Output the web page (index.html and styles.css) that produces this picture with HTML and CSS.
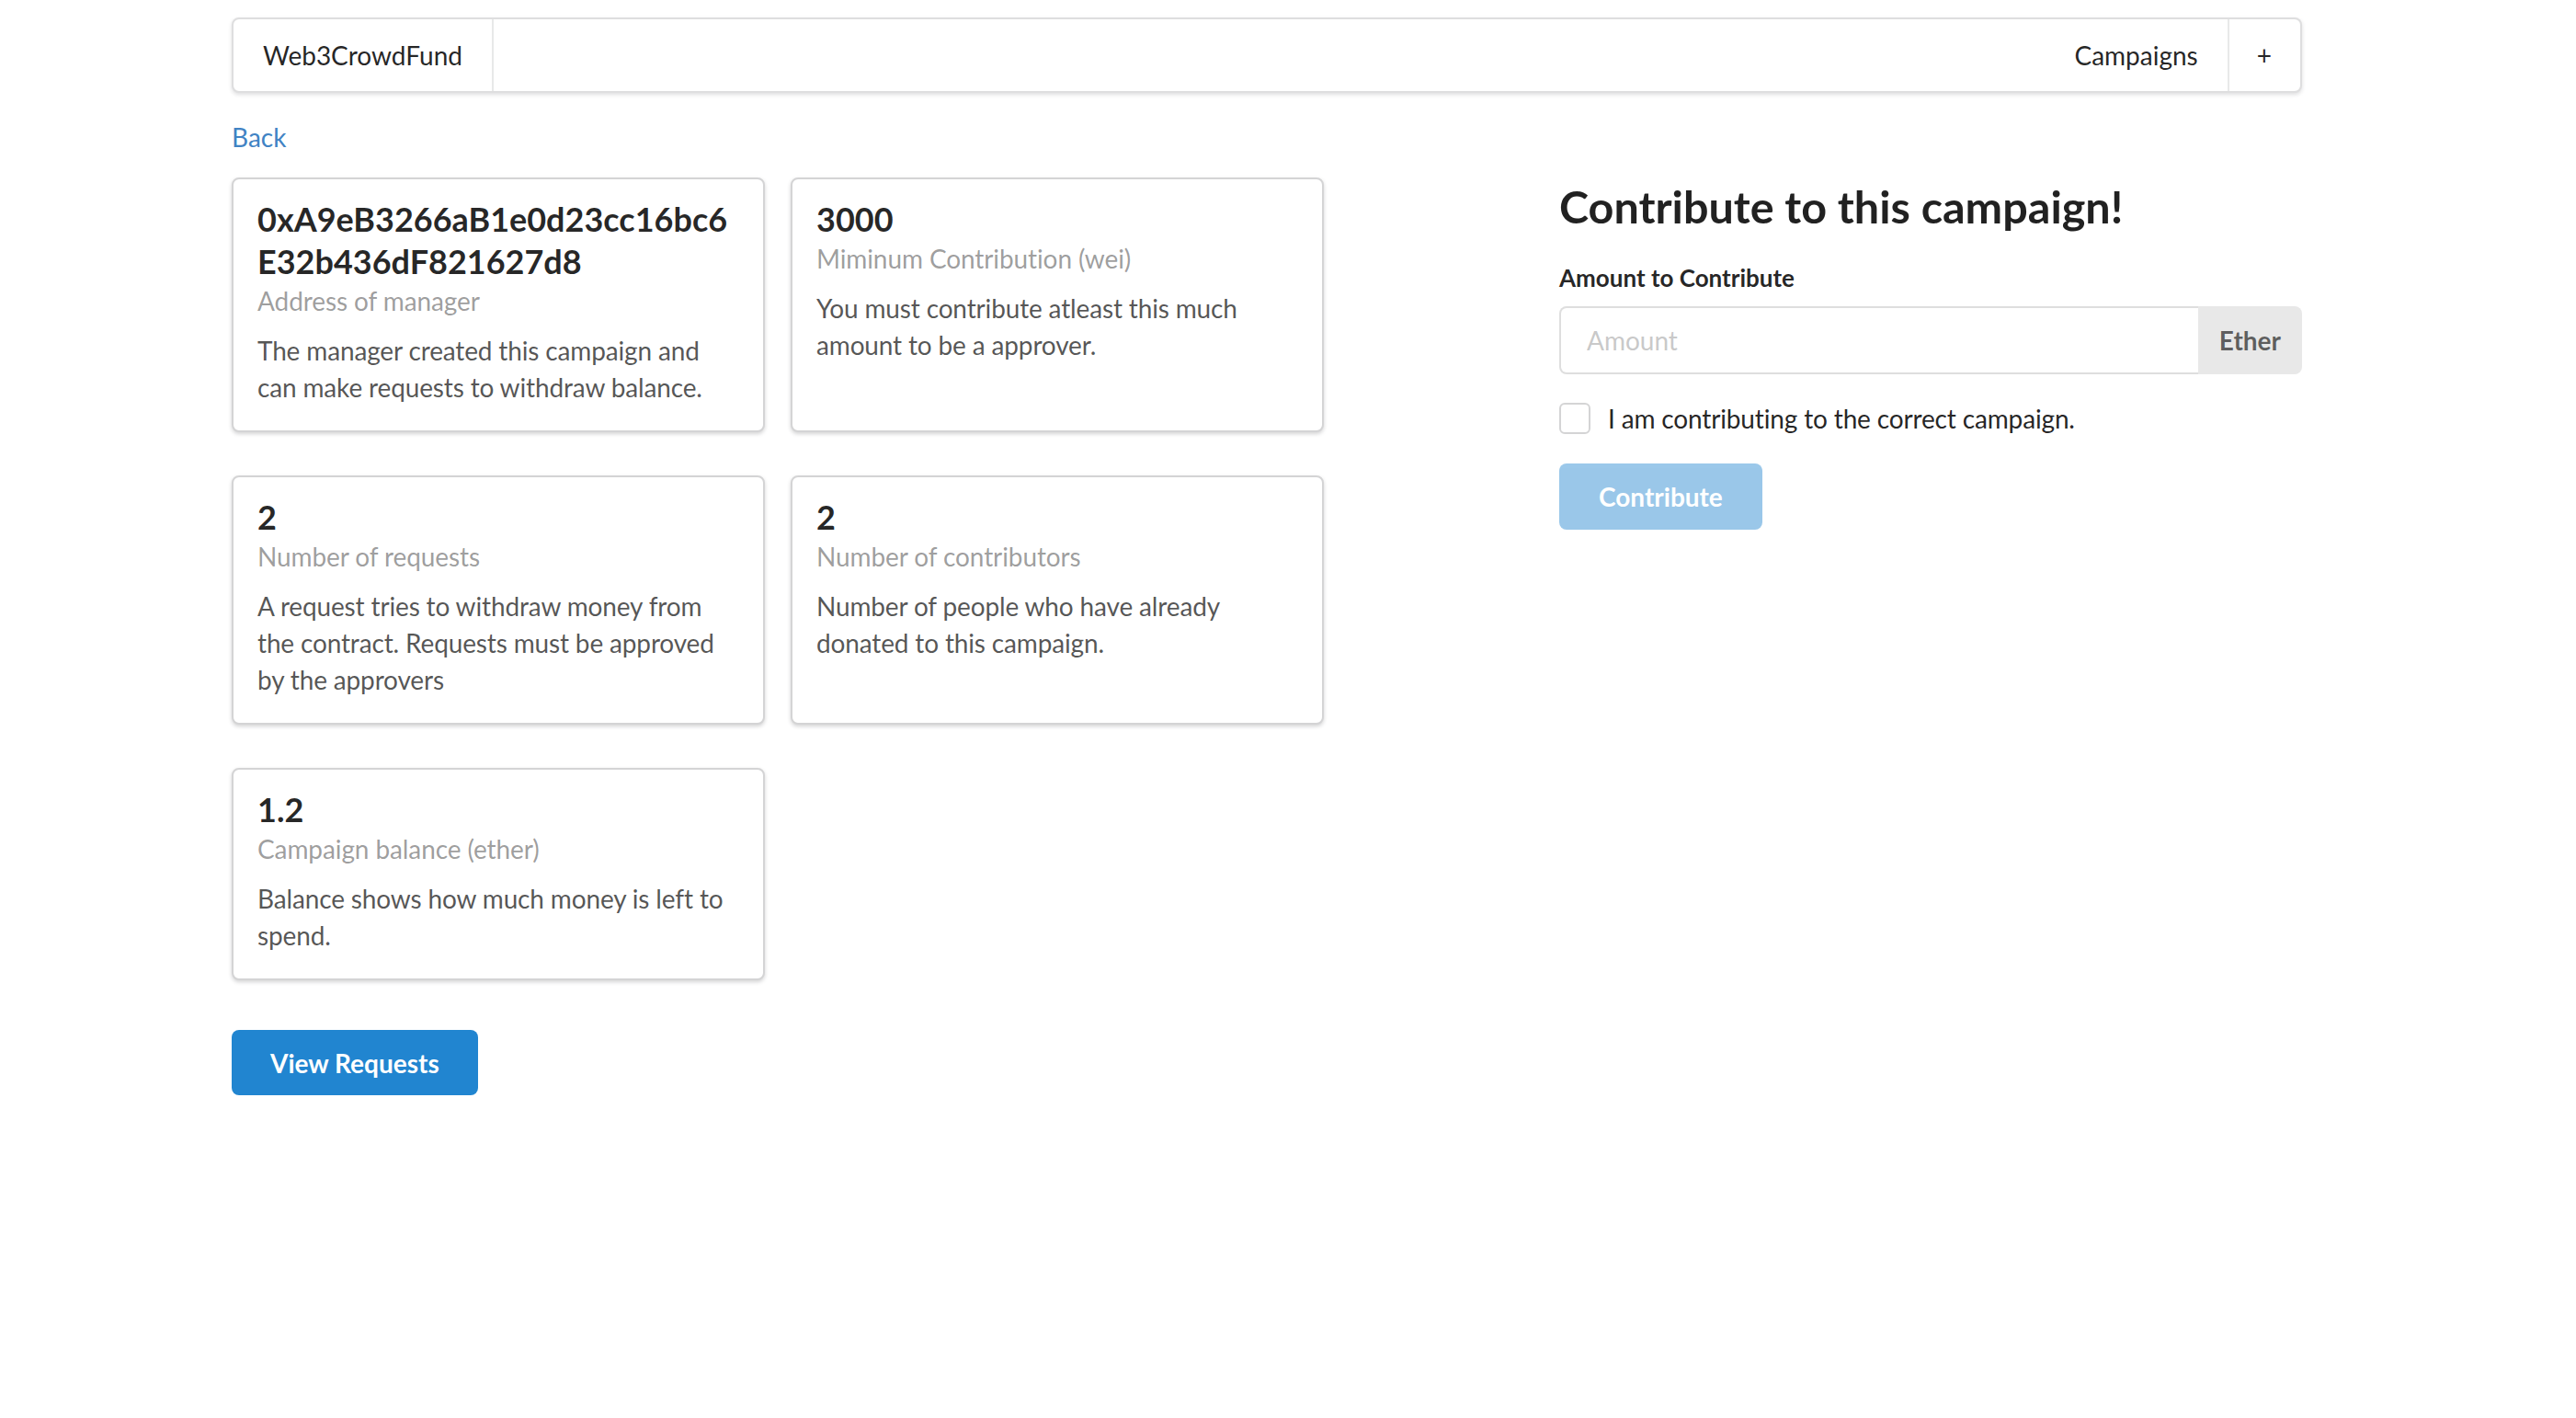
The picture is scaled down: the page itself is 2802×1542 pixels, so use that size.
FILE: index.html
```html
<!DOCTYPE html>
<html lang="en">
<head>
<meta charset="utf-8">
<title>Web3CrowdFund</title>
<link rel="stylesheet" href="styles.css">
</head>
<body>
<div class="page">
  <nav class="menu">
    <a class="item brand" href="#">Web3CrowdFund</a>
    <div class="menu-right">
      <a class="item" href="#">Campaigns</a>
      <a class="item plus" href="#">+</a>
    </div>
  </nav>

  <a class="back" href="#">Back</a>

  <div class="grid">
    <div class="left-col">
      <div class="cards">
        <div class="card">
          <div class="card-header">0xA9eB3266aB1e0d23cc16bc6E32b436dF821627d8</div>
          <div class="meta">Address of manager</div>
          <div class="desc">The manager created this campaign and can make requests to withdraw balance.</div>
        </div>
        <div class="card">
          <div class="card-header">3000</div>
          <div class="meta">Miminum Contribution (wei)</div>
          <div class="desc">You must contribute atleast this much amount to be a approver.</div>
        </div>
        <div class="card">
          <div class="card-header">2</div>
          <div class="meta">Number of requests</div>
          <div class="desc">A request tries to withdraw money from the contract. Requests must be approved by the approvers</div>
        </div>
        <div class="card">
          <div class="card-header">2</div>
          <div class="meta">Number of contributors</div>
          <div class="desc">Number of people who have already donated to this campaign.</div>
        </div>
        <div class="card">
          <div class="card-header">1.2</div>
          <div class="meta">Campaign balance (ether)</div>
          <div class="desc">Balance shows how much money is left to spend.</div>
        </div>
      </div>
    </div>

    <div class="right-col">
      <h2 class="title">Contribute to this campaign!</h2>
      <form class="form">
        <label class="field-label" for="amount">Amount to Contribute</label>
        <div class="labeled-input">
          <input id="amount" type="text" placeholder="Amount">
          <span class="input-label">Ether</span>
        </div>
        <label class="checkbox">
          <span class="box"></span>
          <span class="check-text">I am contributing to the correct campaign.</span>
        </label>
        <button type="button" class="btn primary disabled">Contribute</button>
      </form>
    </div>
  </div>

  <div class="actions">
    <button type="button" class="btn primary">View Requests</button>
  </div>
</div>
</body>
</html>
```

FILE: styles.css
```css
* {
  box-sizing: border-box;
}

html, body {
  margin: 0;
  padding: 0;
  background: #ffffff;
}

body {
  font-family: Lato, "Helvetica Neue", Arial, sans-serif;
  font-size: 28px;
  line-height: 40px;
  color: rgba(0, 0, 0, 0.87);
}

.page {
  width: 2252px;
  margin-left: 252px;
  padding-top: 19px;
}

/* Menu */
.menu {
  display: flex;
  height: 82px;
  border: 2px solid rgba(34, 36, 38, 0.15);
  border-radius: 8px;
  box-shadow: 0 2px 4px 0 rgba(34, 36, 38, 0.15);
  background: #fff;
}

.menu-right {
  margin-left: auto;
  display: flex;
}

.item {
  display: flex;
  align-items: center;
  padding: 0 32px;
  line-height: 1;
  color: rgba(0, 0, 0, 0.87);
  text-decoration: none;
}

.brand {
  border-right: 2px solid rgba(34, 36, 38, 0.1);
}

.plus {
  border-left: 2px solid rgba(34, 36, 38, 0.1);
  padding: 0 31px 0 30px;
}

/* Back link */
.back {
  display: inline-block;
  margin-top: 28px;
  color: #4183c4;
  text-decoration: none;
  line-height: 40px;
}

/* Grid */
.grid {
  display: grid;
  grid-template-columns: 1388px 808px;
  column-gap: 56px;
  margin-top: 24px;
}

.cards {
  display: flex;
  flex-wrap: wrap;
  gap: 47px 28px;
}

.card {
  width: 580px;
  background: #fff;
  border: 2px solid #d4d4d5;
  border-radius: 8px;
  box-shadow: 0 2px 4px 0 #d4d4d5;
  padding: 28px 26px 27px;
}

.card-header {
  font-size: 36px;
  font-weight: 700;
  line-height: 46px;
  margin-top: -8px;
  color: rgba(0, 0, 0, 0.85);
  word-break: break-all;
}

.meta {
  color: rgba(0, 0, 0, 0.4);
  line-height: 40px;
  letter-spacing: -0.1px;
}

.desc {
  margin-top: 14px;
  color: rgba(0, 0, 0, 0.68);
  line-height: 40px;
  letter-spacing: -0.15px;
}

/* Right column */
.title {
  margin: 0 0 29px;
  font-size: 48.5px;
  font-weight: 700;
  line-height: 62px;
  color: rgba(0, 0, 0, 0.87);
}

.form {
  display: flex;
  flex-direction: column;
  align-items: flex-start;
}

.field-label {
  display: block;
  font-size: 26px;
  font-weight: 700;
  line-height: 37px;
  margin-bottom: 12px;
  color: rgba(0, 0, 0, 0.87);
}

.labeled-input {
  display: flex;
  width: 100%;
  height: 74px;
}

.labeled-input input {
  flex: 1;
  min-width: 0;
  height: 74px;
  margin: 0;
  padding: 0 28px;
  font-family: inherit;
  font-size: 28px;
  color: rgba(0, 0, 0, 0.87);
  border: 2px solid rgba(34, 36, 38, 0.15);
  border-right: none;
  border-radius: 8px 0 0 8px;
  outline: none;
  background: #fff;
}

.labeled-input input::placeholder {
  color: rgba(191, 191, 191, 0.87);
}

.input-label {
  display: flex;
  align-items: center;
  padding: 0 23px;
  background: #e8e8e8;
  color: rgba(0, 0, 0, 0.6);
  font-weight: 700;
  border-radius: 0 8px 8px 0;
  line-height: 1;
}

.checkbox {
  display: flex;
  align-items: center;
  margin-top: 31px;
  height: 34px;
}

.box {
  width: 34px;
  height: 34px;
  border: 2px solid #d4d4d5;
  border-radius: 6px;
  background: #fff;
  flex: none;
}

.check-text {
  margin-left: 19px;
  line-height: 34px;
  color: rgba(0, 0, 0, 0.87);
  letter-spacing: -0.15px;
}

.btn {
  height: 72px;
  padding: 0 43px;
  border: none;
  border-radius: 8px;
  font-family: inherit;
  font-size: 28px;
  font-weight: 700;
  line-height: 1;
  color: #fff;
  cursor: pointer;
}

.primary {
  background: #2185d0;
}

.disabled {
  opacity: 0.45;
  margin-top: 32px;
  cursor: default;
}

.actions {
  margin-top: 54px;
}

.actions .btn {
  height: 71px;
  padding: 0 42px;
}
```
